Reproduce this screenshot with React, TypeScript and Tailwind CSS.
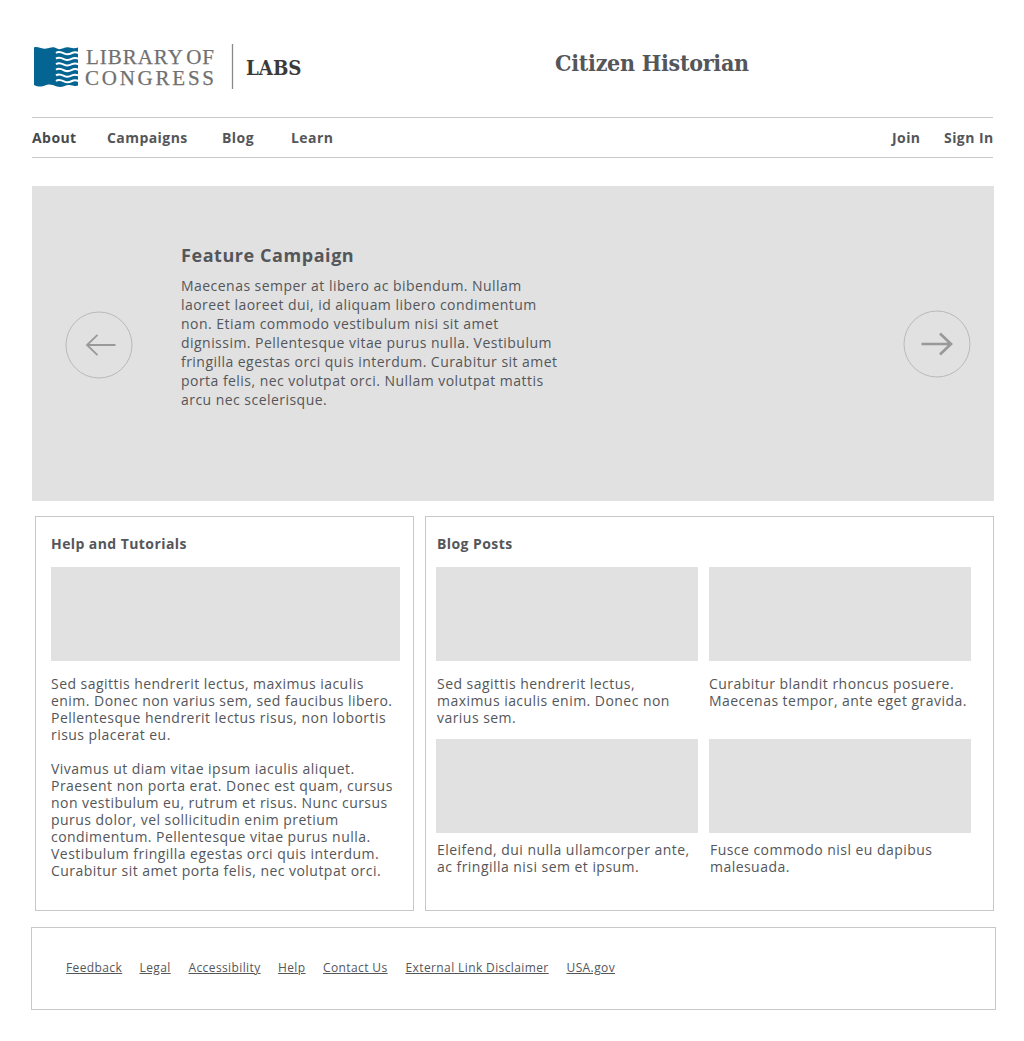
import React from "react";

function Lines({ lines }: { lines: string[] }) {
  return (
    <>
      {lines.map((line, i) => (
        <span key={i} className="block min-h-[17px] whitespace-nowrap">
          {line}
        </span>
      ))}
    </>
  );
}

function Logo() {
  const waves = [0, 1, 2, 3, 4, 5];
  return (
    <svg width="280" height="48" viewBox="0 0 280 48" className="block shrink-0 tracking-normal" aria-label="Library of Congress Labs">
      <path
        d="M2 4.5C6 3 9 6.500 14 5.500S21 3 25 5.500S32 3.500 37 4.500S43 5.500 46 4.500V42.500C43 44 40 41.500 36 42S30 45 25 43.500S18 40.500 13 42.500S6 43.500 2 42Z"
        fill="#046492"
      />
      {waves.map((i) => (
        <path
          key={i}
          d="M24 10C27 7.800 30 9.500 32.500 10.700S37.500 11.300 40 10S44 9 47 10.200"
          transform={`translate(0 ${i * 5.6})`}
          fill="none"
          stroke="#fff"
          strokeWidth="2"
        />
      ))}
      <g fill="#707070" stroke="#707070" strokeWidth="0.250" fontFamily="'Liberation Serif', serif" fontSize="21">
        <text x="54" y="21" textLength="128" lengthAdjust="spacing" wordSpacing="-3">
          LIBRARY OF
        </text>
        <text x="53" y="42" textLength="129" lengthAdjust="spacing">
          CONGRESS
        </text>
      </g>
      <path d="M200.500 1V46" stroke="#8a8a8a" strokeWidth="1.300" />
      <text
        x="214"
        y="31.500"
        fill="#3a3a3a"
        fontFamily="'DejaVu Serif', serif"
        fontWeight="700"
        fontSize="19.500"
        textLength="55.500"
        lengthAdjust="spacingAndGlyphs"
      >
        LABS
      </text>
    </svg>
  );
}

function Arrow({ right = false }: { right?: boolean }) {
  return (
    <svg width="68" height="68" viewBox="0 0 68 68" fill="none" className="block">
      <circle cx="34" cy="34" r="33" stroke="#b9b9b9" />
      {right ? (
        <path d="M18.500 34H48M37 23.500L48 34L37 44.500" stroke="#999" strokeWidth="2.700" />
      ) : (
        <path d="M50.500 34H22M32.500 23.800L22 34L32.500 44.200" stroke="#999" strokeWidth="1.800" />
      )}
    </svg>
  );
}

function Post({ lines, className }: { lines: string[]; className: string }) {
  return (
    <article className="w-[262px]">
      <div className="h-[94px] bg-[#e1e1e1]" />
      <p className={className}>
        <Lines lines={lines} />
      </p>
    </article>
  );
}

const footerLinks = [
  ["Feedback", "w-[73.500px]"],
  ["Legal", "w-[49px]"],
  ["Accessibility", "w-[89.500px]"],
  ["Help", "w-[45px]"],
  ["Contact Us", "w-[82.500px]"],
  ["External Link Disclaimer", "w-[161px]"],
  ["USA.gov", "w-[50px]"],
];

export default function App() {
  return (
    <div className="h-[1041px] w-[1024px] overflow-hidden bg-white pl-8 font-['Open_Sans',sans-serif] text-sm leading-[17px] tracking-[0.460px] text-[#54565a]">
      <header className="flex h-[117px] pt-[43px]">
        <Logo />
        <h1 className="ml-[243px] mt-[4px] whitespace-nowrap font-['DejaVu_Serif',serif] text-[23px] font-bold leading-8 tracking-[-0.280px] [font-stretch:condensed]">
          Citizen Historian
        </h1>
      </header>
      <nav className="flex h-[41px] w-[961px] items-center whitespace-nowrap border-y border-[#c8c8c8] font-bold tracking-[0.430px]">
        <a className="w-[75px] text-[#47494d]">About</a>
        <a className="w-[115px]">Campaigns</a>
        <a className="w-[69px]">Blog</a>
        <a>Learn</a>
        <a className="ml-auto w-[52px]">Join</a>
        <a className="w-[49px]">Sign In</a>
      </nav>
      <section className="mt-7 flex h-[315px] w-[962px] bg-[#e1e1e1]">
        <div className="ml-[33px] mt-[125px]">
          <Arrow />
        </div>
        <div className="ml-12 mt-[57px]">
          <h2 className="text-[18px] font-bold leading-6 tracking-[0.560px]">Feature Campaign</h2>
          <p className="mt-[9px] leading-[19px]">
            <Lines
              lines={[
                "Maecenas semper at libero ac bibendum. Nullam",
                "laoreet laoreet dui, id aliquam libero condimentum",
                "non. Etiam commodo vestibulum nisi sit amet",
                "dignissim. Pellentesque vitae purus nulla. Vestibulum",
                "fringilla egestas orci quis interdum. Curabitur sit amet",
                "porta felis, nec volutpat orci. Nullam volutpat mattis",
                "arcu nec scelerisque.",
              ]}
            />
          </p>
        </div>
        <div className="ml-auto mr-[23px] mt-[124px]">
          <Arrow right />
        </div>
      </section>
      <main className="ml-[3px] mt-[15px] flex gap-[11px]">
        <section className="h-[395px] w-[379px] border border-[#c8c8c8] pl-[15px] pt-[18px]">
          <h3 className="font-bold tracking-[0.420px]">Help and Tutorials</h3>
          <div className="mt-[15px] h-[94px] w-[349px] bg-[#e1e1e1]" />
          <p className="mt-[14px]">
            <Lines
              lines={[
                "Sed sagittis hendrerit lectus, maximus iaculis",
                "enim. Donec non varius sem, sed faucibus libero.",
                "Pellentesque hendrerit lectus risus, non lobortis",
                "risus placerat eu.",
                "",
                "Vivamus ut diam vitae ipsum iaculis aliquet.",
                "Praesent non porta erat. Donec est quam, cursus",
                "non vestibulum eu, rutrum et risus. Nunc cursus",
                "purus dolor, vel sollicitudin enim pretium",
                "condimentum. Pellentesque vitae purus nulla.",
                "Vestibulum fringilla egestas orci quis interdum.",
                "Curabitur sit amet porta felis, nec volutpat orci.",
              ]}
            />
          </p>
        </section>
        <section className="h-[395px] w-[569px] border border-[#c8c8c8] pl-[10px] pt-[18px]">
          <h3 className="ml-px font-bold tracking-[0.420px]">Blog Posts</h3>
          <div className="mt-[15px] grid grid-cols-[262px_262px] grid-rows-[172px_auto] gap-x-[11px]">
            <Post
              className="mt-[14px] pl-px"
              lines={["Sed sagittis hendrerit lectus,", "maximus iaculis enim. Donec non", "varius sem."]}
            />
            <Post
              className="mt-[14px]"
              lines={["Curabitur blandit rhoncus posuere.", "Maecenas tempor, ante eget gravida."]}
            />
            <Post
              className="mt-2 pl-px"
              lines={["Eleifend, dui nulla ullamcorper ante,", "ac fringilla nisi sem et ipsum."]}
            />
            <Post className="mt-2 pl-px" lines={["Fusce commodo nisl eu dapibus", "malesuada."]} />
          </div>
        </section>
      </main>
      <footer className="-ml-px mt-4 flex h-[83px] w-[965px] border border-[#c8c8c8] pl-[34px] pt-8 text-xs tracking-[0.390px]">
        {footerLinks.map(([label, width]) => (
          <div key={label} className={`${width} shrink-0 whitespace-nowrap`}>
            <a className="underline">{label}</a>
          </div>
        ))}
      </footer>
    </div>
  );
}
